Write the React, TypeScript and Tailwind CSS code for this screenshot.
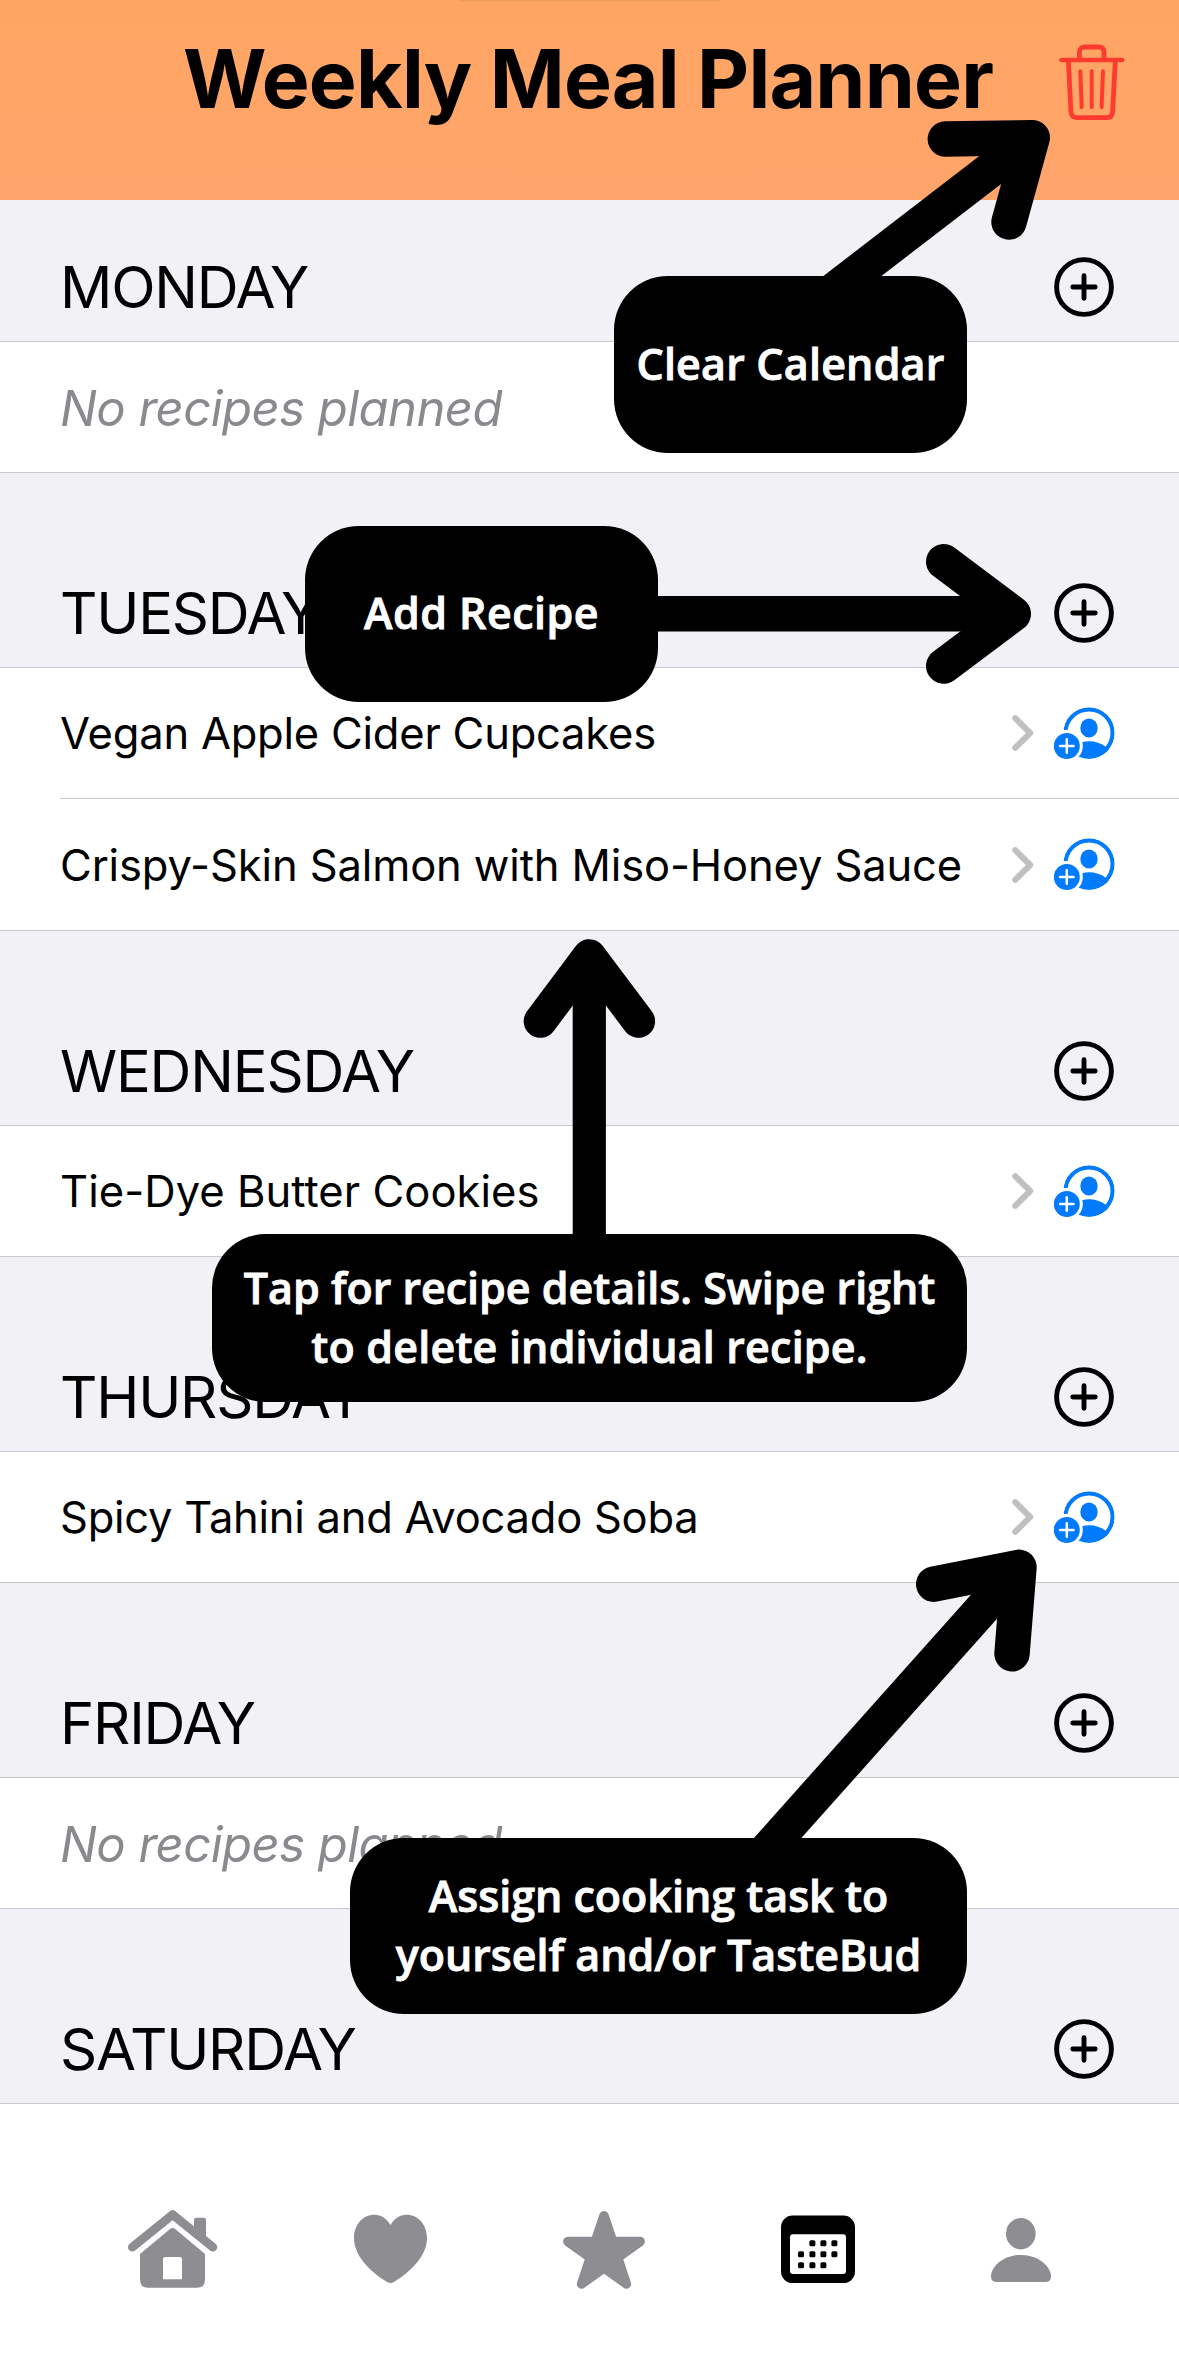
type Recipe = { name: string; tracking: string };
type Day = { name: string; recipes: Recipe[]; hideRows?: boolean };

const days: Day[] = [
  { name: "MONDAY", recipes: [] },
  {
    name: "TUESDAY",
    recipes: [
      { name: "Vegan Apple Cider Cupcakes", tracking: "tracking-[-0.22px]" },
      { name: "Crispy-Skin Salmon with Miso-Honey Sauce", tracking: "tracking-[-0.12px]" },
    ],
  },
  { name: "WEDNESDAY", recipes: [{ name: "Tie-Dye Butter Cookies", tracking: "tracking-[0.05px]" }] },
  { name: "THURSDAY", recipes: [{ name: "Spicy Tahini and Avocado Soba", tracking: "tracking-[-0.25px]" }] },
  { name: "FRIDAY", recipes: [] },
  { name: "SATURDAY", recipes: [], hideRows: true },
];

function TrashIcon() {
  return (
    <svg width="66" height="76" viewBox="0 0 66 76" fill="none" stroke="#ff3b30" strokeLinecap="round" strokeLinejoin="round">
      <path d="M2.4 16H63.2" strokeWidth="4.5" />
      <path d="M20.4 15V8.5Q20.4 3 26 3H39.4Q45 3 45 8.5V15" strokeWidth="4.8" />
      <path d="M9.4 17L11.9 67.5Q12.3 73.6 17.5 73.6H48Q53.2 73.6 53.6 67.5L56.3 17" strokeWidth="4.8" />
      <path d="M21.3 27.3L22.7 63.2M32.7 27.3V63.2M44 27.3L42.6 63.2" strokeWidth="4" />
    </svg>
  );
}

function PlusCircle() {
  return (
    <svg width="60" height="60" viewBox="0 0 60 60" fill="none" stroke="#000" strokeLinecap="round">
      <circle cx="30" cy="30" r="27.4" strokeWidth="4.9" />
      <path d="M30 18.8V41.2M18.8 30H41.2" strokeWidth="4.9" />
    </svg>
  );
}

function Chevron() {
  return (
    <svg width="22" height="36" viewBox="0 0 22 36" fill="none" stroke="#c0c0c1" strokeWidth="6" strokeLinecap="round" strokeLinejoin="round">
      <path d="M3.2 3.2L18.2 18L3.2 32.8" />
    </svg>
  );
}

function AssignIcon() {
  return (
    <svg width="61" height="52" viewBox="0 0 61 52" fill="none" className="mb-[1px]">
      <defs>
        <clipPath id="assign-ring">
          <circle cx="35" cy="26" r="25.7" />
        </clipPath>
      </defs>
      <g clipPath="url(#assign-ring)">
        <circle cx="35" cy="26" r="23.6" stroke="#007aff" strokeWidth="4.2" />
        <path d="M20 55V38Q28 34.3 35 34.3Q44.5 34.3 51.6 39.8L58 44V55Z" fill="#007aff" />
      </g>
      <ellipse cx="35" cy="21" rx="8.7" ry="9.4" fill="#007aff" />
      <path d="M0 23H12V60H0Z" fill="#fff" />
      <circle cx="12.8" cy="39" r="16" fill="#fff" />
      <circle cx="12.8" cy="39" r="13" fill="#007aff" />
      <path d="M12.8 32.3V45.7M6.1 39H19.5" stroke="#fff" strokeWidth="2.5" strokeLinecap="round" />
    </svg>
  );
}

function DaySection({ day, first }: { day: Day; first: boolean }) {
  return (
    <section>
      <div
        className={
          "flex items-end justify-between border-b border-[#c8c8cb] bg-[#f2f1f6] pr-[65px] pb-6 pl-[60px] " +
          (first ? "h-[142px]" : "h-[195px]")
        }
      >
        <h2 className="text-[58px] leading-[60px] tracking-[-1.2px]">{day.name}</h2>
        <PlusCircle />
      </div>
      {!day.hideRows && day.recipes.length === 0 && (
        <div className="flex h-[131px] items-center border-b border-[#c8c8cb] pt-[3px] pl-[60px] text-[49px] tracking-[-0.55px] text-[#8a8a8e] italic">
          No recipes planned
        </div>
      )}
      {day.recipes.map((recipe, i) => {
        const last = i === day.recipes.length - 1;
        return (
          <div key={recipe.name} className={last ? "border-b border-[#c8c8cb] pl-[60px]" : "pl-[60px]"}>
            <div
              className={
                "flex items-center pr-16 " +
                (last ? (i > 0 ? "h-[131px]" : "h-[130px]") : "h-[131px] border-b border-[#c8c8cb]")
              }
            >
              <span className={"grow pt-[2px] text-[43.5px] whitespace-nowrap " + recipe.tracking}>{recipe.name}</span>
              <div className="flex items-center gap-5">
                <Chevron />
                <AssignIcon />
              </div>
            </div>
          </div>
        );
      })}
    </section>
  );
}

function TabBar() {
  return (
    <nav className="flex h-[267px] items-start gap-[136px] bg-white pt-[106px] pl-32 text-[#8e8d92]">
      <svg width="90" height="80" viewBox="0 0 90 80" fill="currentColor">
        <path d="M4.4 37.2L44.6 4.6L84.8 37.2" fill="none" stroke="currentColor" strokeWidth="8.8" strokeLinecap="round" strokeLinejoin="round" />
        <path d="M66 24V9.7Q66 7.7 68 7.7H76Q78 7.7 78 9.7V32Z" />
        <path
          fillRule="evenodd"
          d="M42.3 18.8Q44.6 17 46.9 18.8L77 44V69.7Q77 77.7 69 77.7H20Q12 77.7 12 69.7V44ZM37 47Q35 47 35 49V69.3H54V49Q54 47 52 47Z"
        />
      </svg>
      <svg width="73" height="80" viewBox="0 0 73 80" fill="currentColor">
        <path d="M36.5 15C33 8.4 27 4.7 20.5 4.7C8.5 4.7 0 15 0 28C0 44 13 59.5 33 72Q36.5 74 40 72C60 59.5 73 44 73 28C73 15 64.5 4.7 52.5 4.7C46 4.7 40 8.4 36.5 15Z" />
      </svg>
      <svg width="82" height="80" viewBox="0 0 82 80" fill="currentColor" stroke="currentColor" strokeWidth="9.6" strokeLinejoin="round">
        <path d="M41 5.8L49.6 31.5H77.1L54.6 47.5L63.4 73.9L41 57.8L18.6 73.9L27.4 47.5L4.9 31.5H32.4Z" />
      </svg>
      <svg width="74" height="80" viewBox="0 0 74 80" fill="#000">
        <rect y="5.6" width="74" height="67.4" rx="11.5" />
        <rect x="9" y="24.3" width="56" height="39.8" rx="3" fill="#fff" />
        {[
          [31.4, 33.3], [42.4, 33.3], [53.4, 33.3],
          [20, 44.2], [31.4, 44.2], [42.4, 44.2], [53.4, 44.2],
          [20, 55.3], [31.4, 55.3], [42.4, 55.3],
        ].map(([x, y]) => (
          <rect key={x + "-" + y} x={x - 3} y={y - 3} width="6" height="6" rx="1.5" />
        ))}
      </svg>
      <svg width="60" height="80" viewBox="0 0 60 80" fill="currentColor">
        <ellipse cx="29.8" cy="23.7" rx="14.8" ry="15.7" />
        <path d="M0 66.5C0 57 12 45 30 45S60 57 60 66.5Q60 72 54 72H6Q0 72 0 66.5Z" />
      </svg>
    </nav>
  );
}

const bubble =
  "absolute flex flex-col items-center justify-center rounded-[54px] bg-black pb-[1px] text-center font-['Open_Sans',sans-serif] text-[43px] leading-[58.7px] font-semibold whitespace-nowrap text-white [-webkit-text-stroke:0.9px_white]";

function Callouts() {
  return (
    <>
      <svg
        className="absolute top-0 left-0"
        width="1179"
        height="2371"
        viewBox="0 0 1179 2371"
        fill="none"
        stroke="#000"
        strokeWidth="35.4"
        strokeLinejoin="round"
      >
        <path d="M829 294L1032.3 137.6" />
        <path d="M945.3 139L1032.3 137.6L1009 222" strokeLinecap="round" />
        <path d="M640 613.8H1012" />
        <path d="M943.7 561.7L1013.3 613.8L943.7 666" strokeLinecap="round" />
        <path d="M589.3 1260V957" strokeWidth="33.2" />
        <path d="M540.3 1021.2L589.3 955.8L638.5 1021.2" strokeWidth="33.2" strokeLinecap="round" />
        <path d="M750 1869L1019 1567.5" />
        <path d="M933.7 1584.2L1019 1567.3L1012 1653.8" strokeLinecap="round" />
      </svg>
      <div className={bubble + " top-[276px] left-[614px] h-[177px] w-[353px] tracking-[0.2px]"}>Clear Calendar</div>
      <div className={bubble + " top-[526px] left-[305px] h-[176px] w-[353px] tracking-[0.45px]"}>Add Recipe</div>
      <div className={bubble + " top-[1234px] left-[212px] h-[168px] w-[755px]"}>
        <span>Tap for recipe details. Swipe right</span>
        <span className="tracking-[0.2px]">to delete individual recipe.</span>
      </div>
      <div className={bubble + " top-[1838px] left-[350px] h-[176px] w-[617px]"}>
        <span>Assign cooking task to</span>
        <span>yourself and/or TasteBud</span>
      </div>
    </>
  );
}

export default function App() {
  return (
    <div className="relative h-[2371px] w-[1179px] overflow-hidden bg-white font-['Inter',sans-serif] text-black">
      <header className="flex h-[200px] flex-col bg-gradient-to-b from-[#ffa563] to-[#ffa56c]">
        <div className="ml-[459px] h-px w-[262px] bg-[#ee9d61]" />
        <div className="flex items-start">
          <h1 className="ml-[183px] w-[876px] pt-[28px] text-[80.5px] leading-[100px] font-bold tracking-[-0.8px] whitespace-nowrap">
            Weekly Meal Planner
          </h1>
          <div className="pt-[43px]">
            <TrashIcon />
          </div>
        </div>
      </header>
      <main>
        {days.map((day, i) => (
          <DaySection key={day.name} day={day} first={i === 0} />
        ))}
      </main>
      <TabBar />
      <Callouts />
    </div>
  );
}
